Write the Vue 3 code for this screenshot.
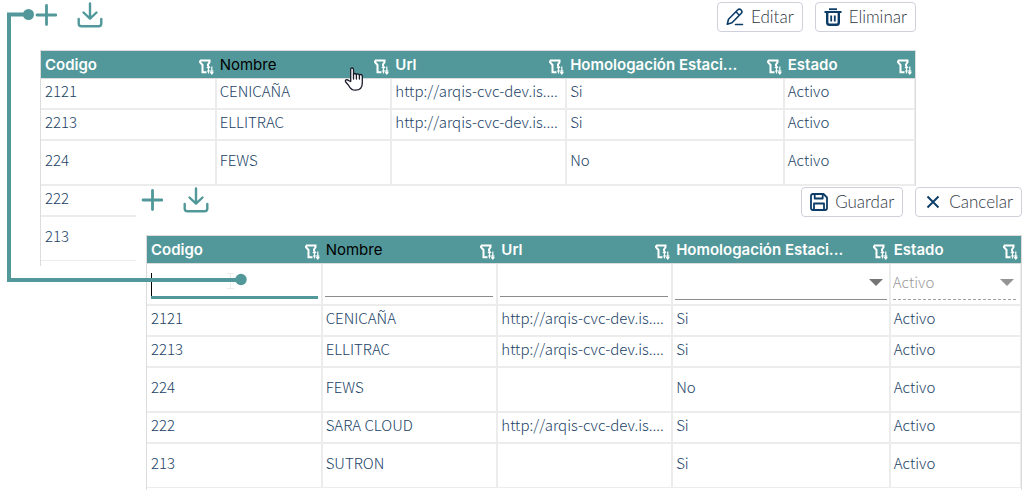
<script setup>
import { ref } from 'vue'

const columns = [
  { key: 'codigo', label: 'Codigo' },
  { key: 'nombre', label: 'Nombre', active: true },
  { key: 'url', label: 'Url' },
  { key: 'homologacion', label: 'Homologación Estaci...' },
  { key: 'estado', label: 'Estado' },
]

const link = 'http://arqis-cvc-dev.is....'

const listRows = [
  { codigo: '2121', nombre: 'CENICAÑA', url: link, homologacion: 'Si', estado: 'Activo' },
  { codigo: '2213', nombre: 'ELLITRAC', url: link, homologacion: 'Si', estado: 'Activo' },
  { codigo: '224', nombre: 'FEWS', url: '', homologacion: 'No', estado: 'Activo', tall: true },
  { codigo: '222' },
  { codigo: '213', tall: true },
]

const editRows = [
  ...listRows.slice(0, 3),
  { codigo: '222', nombre: 'SARA CLOUD', url: link, homologacion: 'Si', estado: 'Activo' },
  { codigo: '213', nombre: 'SUTRON', url: '', homologacion: 'Si', estado: 'Activo', tall: true },
]

const panels = [
  {
    name: 'list',
    rows: listRows,
    actions: [
      { label: 'Editar', icon: 'edit' },
      { label: 'Eliminar', icon: 'trash' },
    ],
  },
  {
    name: 'form',
    rows: editRows,
    editing: true,
    actions: [
      { label: 'Guardar', icon: 'save' },
      { label: 'Cancelar', icon: 'close' },
    ],
  },
]

const draft = ref({ codigo: '', nombre: '', url: '', homologacion: '', estado: 'Activo' })
</script>

<template>
  <main class="page">
    <section v-for="panel in panels" :key="panel.name" class="panel" :class="panel.name">
      <div class="toolbar">
        <div class="tools">
          <button class="tool" type="button" aria-label="Agregar">
            <svg width="22" height="22" viewBox="0 0 22 22" fill="none" stroke="currentColor" stroke-width="2.800" stroke-linecap="round">
              <path d="M11.500 1.500v19M2 11h19" />
            </svg>
          </button>
          <button class="tool" type="button" aria-label="Descargar">
            <svg width="26" height="26" viewBox="0 0 26 26" fill="none" stroke="currentColor" stroke-width="2.400" stroke-linecap="round" stroke-linejoin="round">
              <path d="M13 1.500v15M6.500 10.500l6.500 6.200 6.500-6.200M1.700 17v4.500q0 2.800 2.800 2.800h17q2.800 0 2.800-2.800V17" />
            </svg>
          </button>
        </div>
        <div class="actions">
          <button v-for="action in panel.actions" :key="action.label" class="action" :class="action.icon" type="button">
            <svg v-if="action.icon === 'edit'" width="18" height="18" viewBox="0 0 18 18" fill="none" stroke="currentColor" stroke-width="1.600" stroke-linejoin="round" stroke-linecap="round">
              <path d="M1.300 16.200l1.200-5L11.600 2q1.800-1.700 3.500 0t0 3.500L6 14.800zM10 3.800l3.300 3.400M9.500 16.500h7" />
            </svg>
            <svg v-else-if="action.icon === 'trash'" width="18" height="18" viewBox="0 0 18 18" fill="none" stroke="currentColor" stroke-width="2">
              <path d="M5 1.200h8" stroke-width="1.800" />
              <path d="M.5 4h17" />
              <path d="M3.200 4v10.500q0 2.300 2.300 2.300h7q2.300 0 2.300-2.300V4" stroke-width="2.400" />
              <path d="M7.200 7.500v6M10.800 7.500v6" stroke-width="1.800" />
            </svg>
            <svg v-else-if="action.icon === 'save'" width="18" height="18" viewBox="0 0 18 18" fill="none" stroke="currentColor" stroke-width="1.800" stroke-linejoin="round">
              <path d="M3 1h10.500L17 4.500V15q0 2-2 2H3q-2 0-2-2V3q0-2 2-2z" />
              <path d="M4.700 1v4.500h8V1M4 17v-6.500h10V17" />
            </svg>
            <svg v-else width="18" height="18" viewBox="0 0 18 18" fill="none" stroke="currentColor" stroke-width="1.900">
              <path d="M3.500 3.500l11 11M14.500 3.500l-11 11" />
            </svg>
            <span>{{ action.label }}</span>
          </button>
        </div>
      </div>

      <div class="frame">
        <table class="grid">
          <colgroup>
            <col class="w-codigo" />
            <col class="w-nombre" />
            <col class="w-url" />
            <col class="w-homologacion" />
            <col />
          </colgroup>
          <thead>
            <tr>
              <th v-for="col in columns" :key="col.key" scope="col" :class="{ active: col.active }">
                <div class="head">
                  <span>{{ col.label }}</span>
                  <svg class="filter" width="15" height="16" viewBox="0 0 15 16" fill="none" stroke="#fff">
                    <path d="M1 1.500h9.500v1.700L9 5.500V7M1 1.500v1.700L3.500 6v7.200h4" stroke-width="2" />
                    <path d="M9.500 7v7.500M8 9l1.500-1.800L11 9M12.800 7.500v7.500M11.300 13.200l1.500 1.800 1.500-1.800M8 12h6.500" stroke-width="1.200" />
                  </svg>
                </div>
              </th>
            </tr>
          </thead>
          <tbody>
            <tr v-if="panel.editing" class="entry">
              <td>
                <div class="focus-field">
                  <input v-model="draft.codigo" class="field focused" type="text" aria-label="Codigo" />
                  <span class="caret"></span>
                </div>
              </td>
              <td><input v-model="draft.nombre" class="field" type="text" aria-label="Nombre" /></td>
              <td><input v-model="draft.url" class="field" type="text" aria-label="Url" /></td>
              <td>
                <div class="choice">
                  <select v-model="draft.homologacion" aria-label="Homologación Estación">
                    <option value=""></option>
                    <option>Si</option>
                    <option>No</option>
                  </select>
                </div>
              </td>
              <td>
                <div class="choice disabled">
                  <select v-model="draft.estado" aria-label="Estado" disabled>
                    <option>Activo</option>
                  </select>
                </div>
              </td>
            </tr>
            <tr v-for="row in panel.rows" :key="row.codigo" :class="{ tall: row.tall }">
              <td v-for="col in columns" :key="col.key">{{ row[col.key] }}</td>
            </tr>
          </tbody>
        </table>
      </div>
    </section>

    <svg class="overlay connector" width="250" height="290" viewBox="0 0 250 290" fill="none" aria-hidden="true">
      <path d="M227 273.500h7M230.500 274v14M227 288.500h7" stroke="#ececec" />
      <path d="M28 14.500H9V280h232" stroke="#52989a" stroke-width="4" />
      <circle cx="28.500" cy="14.500" r="5.500" fill="#52989a" />
      <circle cx="241" cy="279.500" r="5.700" fill="#52989a" />
    </svg>

    <svg class="overlay hand" width="20" height="26" viewBox="0 0 20 26" fill="#fff" stroke="#1b1b2b" stroke-width="1.300" stroke-linejoin="round" stroke-linecap="round" aria-hidden="true">
      <path d="M6.700 14.500V2.500Q6.700 1 8 1t1.500 1.500V7.500q.2-1 1.400-1t1.500 1.300q.2-.9 1.500-.9t1.500 1.400q.2-.8 1.400-.8t1.500 1.500V16c0 4.500-2.700 7.200-7 7.200-3.500 0-5-1.500-6.500-4.500L1.700 15q-.8-1.600.4-2.100t2.600.7z" />
      <path d="M9.500 7.500v4.500M12.400 8v4M15.400 8.500V12" />
    </svg>
  </main>
</template>

<style>
body {
  background: #fff;
}
</style>

<style scoped>
.page {
  position: relative;
  overflow: hidden;
  color: #213f66;
  font: 300 15px/20px "Noto Sans CJK JP", "Noto Sans", sans-serif;
}

.panel {
  display: flex;
  flex-direction: column;
  gap: 18px;
  background: #fff;
}

.list {
  padding: 2px 113px 0 40px;
}

.form {
  position: relative;
  margin: -80px 0 0 136px;
  padding: 1px 7px 0 10px;
}

.toolbar {
  display: flex;
  justify-content: space-between;
  height: 30px;
}

.tools {
  display: flex;
  align-items: center;
  gap: 20px;
  height: 26px;
  margin-left: -5px;
}

.tool {
  display: flex;
  padding: 0;
  border: 0;
  background: none;
  color: #52989a;
}

.actions {
  display: flex;
  gap: 12px;
}

.action {
  display: flex;
  align-items: center;
  gap: 7px;
  padding: 0 8px;
  border: 1px solid #cfd0dc;
  border-radius: 4px;
  background: #fff;
  color: #0b3c68;
  font: 300 17px/20px Lato, sans-serif;
}

.action span {
  color: #30363f;
}

.frame {
  border: 1px solid #dcdcdc;
  border-bottom: 0;
}

.list .frame {
  padding-bottom: 5px;
}

.form .frame {
  padding-bottom: 2px;
}

.grid {
  width: 100%;
  table-layout: fixed;
  border-collapse: separate;
  border-spacing: 0;
}

.w-codigo,
.w-nombre {
  width: 20.1%;
}

.w-url {
  width: 20%;
}

.w-homologacion {
  width: 24.9%;
}

th {
  height: 27px;
  padding: 0 3px;
  border-bottom: 1px solid #dcdcdc;
  background: #52989a;
  color: #fff;
  font: 600 15px/20px Inter, sans-serif;
  text-align: left;
  white-space: nowrap;
}

th.active {
  color: #000;
  font-weight: 400;
}

.head {
  display: flex;
  align-items: center;
  justify-content: space-between;
}

.filter {
  flex: none;
  position: relative;
  top: 2px;
}

td {
  box-sizing: border-box;
  height: 31px;
  padding: 0 2px 6px 3px;
  border-right: 2px solid #ececec;
  border-bottom: 2px solid #ececec;
  white-space: nowrap;
}

td:first-child,
th:first-child {
  padding-left: 4px;
}

td:last-child {
  border-right-width: 1px;
}

.tall td {
  height: 45px;
}

tr:last-child td {
  height: 44px;
  border-bottom-width: 1px;
}

.entry td {
  height: 42px;
  padding-top: 8px;
  padding-bottom: 4px;
  vertical-align: top;
}

.entry td:not(:first-child) {
  padding-left: 2px;
}

.field {
  display: block;
  box-sizing: border-box;
  width: calc(100% - 1px);
  height: 25px;
  padding: 0;
  border: 0;
  border-bottom: 1px solid #8c8c8c;
  outline: 0;
  background: none;
  color: inherit;
  font: inherit;
}

.focused {
  height: 27px;
  border-bottom: 3px solid #52989a;
}

.focus-field {
  position: relative;
}

.caret {
  position: absolute;
  top: 1px;
  left: 0;
  width: 1px;
  height: 23px;
  background: #000;
}

.choice {
  position: relative;
  border-bottom: 1px solid #8c8c8c;
}

.choice::after {
  position: absolute;
  top: 7px;
  right: 4px;
  border: 7px solid transparent;
  border-top-color: #757575;
  border-bottom: 0;
  content: "";
}

.choice select {
  display: block;
  width: 100%;
  height: 27px;
  padding: 0 0 9px;
  border: 0;
  appearance: none;
  background: none;
  color: inherit;
  font: inherit;
}

.disabled {
  margin-right: 2px;
  border-bottom: 1px dashed #a0a0a0;
}

.disabled::after {
  right: 2px;
  border-top-color: #949494;
}

.choice.disabled select {
  color: #999;
  opacity: 1;
}

.overlay {
  position: absolute;
  pointer-events: none;
}

.connector {
  top: 0;
  left: 0;
}

.hand {
  top: 67px;
  left: 344px;
}
</style>
